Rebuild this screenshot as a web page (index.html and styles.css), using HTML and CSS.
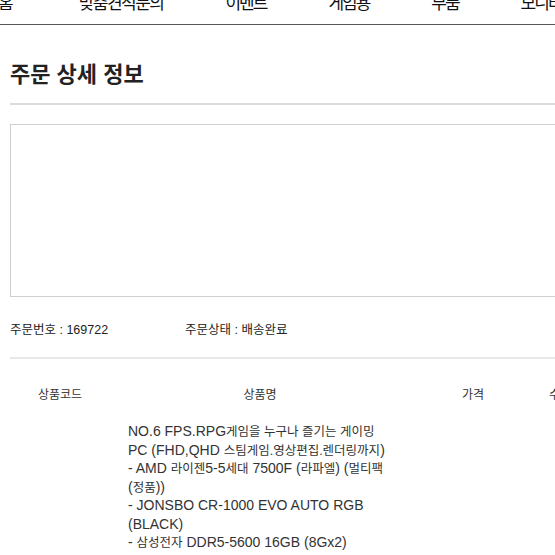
FILE: index.html
```html
<!DOCTYPE html>
<html lang="ko">
<head>
<meta charset="utf-8">
<title>주문 상세 정보</title>
<link rel="stylesheet" href="styles.css">
</head>
<body>
<nav class="topnav">
  <a class="nav-item nav-home">홈</a>
  <a class="nav-item nav-first">맞춤견적문의</a>
  <a class="nav-item">이벤트</a>
  <a class="nav-item">게임용</a>
  <a class="nav-item">부품</a>
  <a class="nav-item">모니터</a>
</nav>
<main class="page">
  <h1 class="title">주문 상세 정보</h1>
  <div class="box"></div>
  <div class="info">
    <span class="info-item">주문번호 : 169722</span>
    <span class="info-item">주문상태 : 배송완료</span>
  </div>
  <div class="table">
    <div class="thead">
      <div class="th">상품코드</div>
      <div class="th">상품명</div>
      <div class="th">가격</div>
      <div class="th">수량</div>
    </div>
    <div class="trow">
      <div class="td"></div>
      <div class="td desc">NO.6 FPS.RPG<span class="k">게임을 누구나 즐기는 게이밍</span><br>PC (FHD,QHD <span class="k">스팀게임.영상편집.렌더링까지</span>)<br>- AMD <span class="k">라이젠</span>5-5<span class="k">세대</span> 7500F (<span class="k">라파엘</span>) (<span class="k">멀티팩</span><br>(<span class="k">정품</span>))<br>- JONSBO CR-1000 EVO AUTO RGB<br>(BLACK)<br>- <span class="k">삼성전자</span> DDR5-5600 16GB (8Gx2)<br>- ASUS PRIME A620M-K <span class="k">대원씨티에스</span></div>
      <div class="td"></div>
      <div class="td"></div>
    </div>
  </div>
</main>
</body>
</html>
```
FILE: styles.css
```css
html, body {
  margin: 0;
  padding: 0;
  background: #fff;
}
body {
  overflow: hidden;
  font-family: "Liberation Sans", "Noto Sans CJK KR", sans-serif;
  color: #333;
}
.topnav {
  box-sizing: border-box;
  height: 25px;
  border-bottom: 1px solid #555;
  overflow: hidden;
  display: flex;
  align-items: flex-end;
  gap: 62px;
  padding: 0 0 12px 0;
  white-space: nowrap;
}
.nav-item {
  font-size: 17px;
  line-height: 17px;
  letter-spacing: -2px;
  color: #111;
  text-decoration: none;
  flex: none;
}
.nav-home {
  margin-left: -2px;
}
.nav-first {
  margin-left: 5px;
  letter-spacing: -1.5px;
}
.page {
  margin-left: 10px;
  width: 1100px;
}
.title {
  margin: 35px 0 0;
  padding-bottom: 13px;
  font-size: 22px;
  line-height: 30px;
  font-weight: bold;
  color: #222;
  border-bottom: 2px solid #dcdcdc;
}
.box {
  margin-top: 19px;
  height: 171px;
  border: 1px solid #cfcfcf;
}
.info {
  display: flex;
  padding: 24px 0 18px;
  border-bottom: 2px solid #e8e8e8;
  font-size: 12.5px;
  line-height: 18px;
  color: #222;
}
.info-item:first-child {
  width: 175px;
}
.thead, .trow {
  display: grid;
  grid-template-columns: 100px 300px 126px 48px;
}
.thead {
  padding: 27px 0 18px;
  font-size: 12px;
  line-height: 18px;
  color: #333;
}
.th {
  text-align: center;
}
.desc {
  padding: 0 18px;
  font-size: 14px;
  line-height: 18.5px;
  color: #333;
  white-space: nowrap;
}
.k {
  font-size: 12.5px;
  line-height: 12px;
}
```
